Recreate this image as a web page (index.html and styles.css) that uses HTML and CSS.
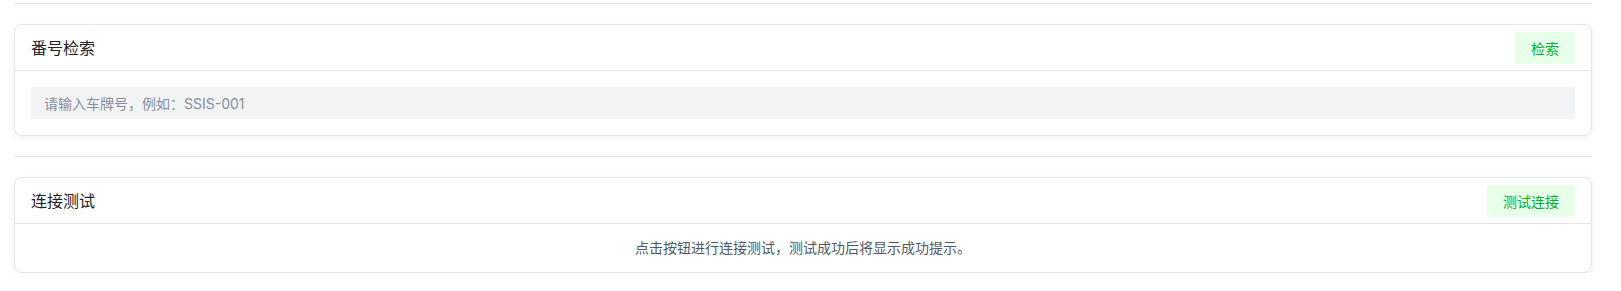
FILE: index.html
```html
<!DOCTYPE html>
<html lang="zh-CN">

<head>
  <meta charset="UTF-8" />
  <meta name="viewport" content="width=device-width, initial-scale=1" />
  <title>番号检索</title>
  <link rel="stylesheet" href="styles.css">
</head>

<body>
  <div class="page">
    <hr class="divider">

    <div class="card">
      <div class="card-header">
        <span class="card-title">番号检索</span>
        <button type="button" class="btn">检索</button>
      </div>
      <div class="card-body">
        <input type="text" class="search-input" placeholder="请输入车牌号，例如：SSIS-001" />
      </div>
    </div>

    <hr class="divider">

    <div class="card">
      <div class="card-header">
        <span class="card-title">连接测试</span>
        <button type="button" class="btn">测试连接</button>
      </div>
      <div class="card-body center">
        <p class="hint">点击按钮进行连接测试，测试成功后将显示成功提示。</p>
      </div>
    </div>
  </div>
</body>

</html>
```

FILE: styles.css
```css
* {
  box-sizing: border-box;
  margin: 0;
  padding: 0;
}

body {
  font-family: Inter, "Noto Sans CJK SC", sans-serif;
  background-color: #fff;
  color: #1d2129;
  font-size: 14px;
}

.page {
  padding: 3px 29px 0 14px;
}

.divider {
  border: none;
  border-top: 1px solid #e5e6eb;
  margin: 0 0 20px;
}

.card + .divider {
  margin-top: 20px;
}

.card {
  background-color: #fff;
  border: 1px solid #e5e6eb;
  border-radius: 8px;
  box-shadow: 0 2px 8px rgba(0, 0, 0, 0.05);
}

.card-header {
  display: flex;
  justify-content: space-between;
  align-items: center;
  padding: 7px 16px 6px;
  border-bottom: 1px solid #e5e6eb;
}

.card-title {
  font-size: 16px;
  font-weight: 400;
  color: #1d2129;
  line-height: 24px;
}

.btn {
  height: 32px;
  padding: 0 16px;
  font-family: inherit;
  font-size: 14px;
  color: #00b42a;
  background-color: #e8ffea;
  border: none;
  border-radius: 2px;
  cursor: pointer;
}

.card-body {
  padding: 16px;
}

.card-body.center {
  padding: 13px 16px;
  text-align: center;
}

.search-input {
  display: block;
  width: 100%;
  height: 32px;
  padding: 0 13px;
  font-family: inherit;
  font-size: 14px;
  color: #1d2129;
  background-color: #f2f3f5;
  border: none;
  border-radius: 2px;
  outline: none;
}

.search-input::placeholder {
  color: #86909c;
}

.hint {
  color: #4e5969;
  line-height: 22px;
}
```
